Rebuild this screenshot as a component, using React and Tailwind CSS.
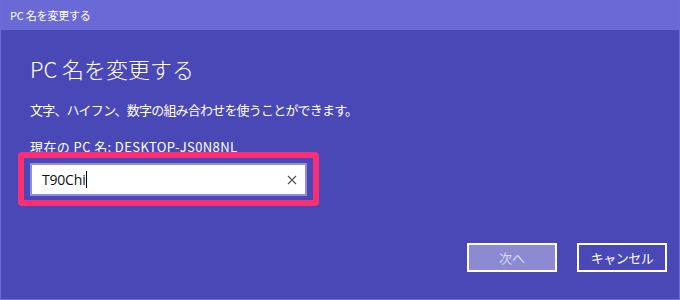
export default function App() {
  const jp = { fontFamily: '"Noto Sans CJK JP", "Noto Sans", sans-serif' };

  return (
    <div
      className="w-[680px] h-[300px] flex flex-col bg-[#4a47b6] border-x border-b border-[#6d6bd8] text-white overflow-hidden"
      style={jp}
    >
      {/* Title bar */}
      <div className="h-[30px] shrink-0 bg-[#6b69d6] flex items-center pl-[9px] text-[11px] tracking-[-0.2px]">
        PC 名を変更する
      </div>

      {/* Content */}
      <div className="flex flex-col flex-1 pl-[29px] pr-[12px]">
        <h1 className="mt-[23px] text-[22px] leading-[30px] font-light">
          PC 名を変更する
        </h1>
        <p className="mt-[17px] text-[13px] leading-[20px] tracking-[-0.8px]">
          文字、ハイフン、数字の組み合わせを使うことができます。
        </p>
        <p className="mt-[17px] text-[13px] leading-[20px] tracking-[0.4px]">
          現在の PC 名: DESKTOP-JS0N8NL
        </p>

        {/* Input with highlight */}
        <div className="relative mt-[6px] w-[277px]">
          <div className="absolute -left-[12px] -top-[11px] -right-[12px] -bottom-[10px] border-[6px] border-[#fb2f76] rounded-[4px]"></div>
          <div className="relative h-[33px] bg-white border-2 border-[#8f8ddc] flex items-center pl-[10px] pr-[8px]">
            <span
              className="text-[14px] text-[#111] tracking-[-0.2px]"
              style={{ fontFamily: '"Open Sans", "Noto Sans", sans-serif' }}
            >
              T90Chi
            </span>
            <span className="w-px h-[17px] bg-black ml-px"></span>
            <svg
              className="ml-auto w-[10px] h-[10px] text-[#555]"
              viewBox="0 0 10 10"
              fill="none"
              stroke="currentColor"
              strokeWidth="1.2"
            >
              <path d="M1 1l8 8M9 1l-8 8" />
            </svg>
          </div>
        </div>

        {/* Buttons */}
        <div className="mt-auto mb-[27px] flex justify-end gap-[20px]">
          <button className="w-[90px] h-[29px] border-2 border-white bg-[#8c8ad3] text-[13px] text-[#dcdbf4]">
            次へ
          </button>
          <button className="w-[90px] h-[29px] border-2 border-white bg-[#4a47b6] text-[13px] text-white tracking-[-0.5px]">
            キャンセル
          </button>
        </div>
      </div>
    </div>
  );
}
